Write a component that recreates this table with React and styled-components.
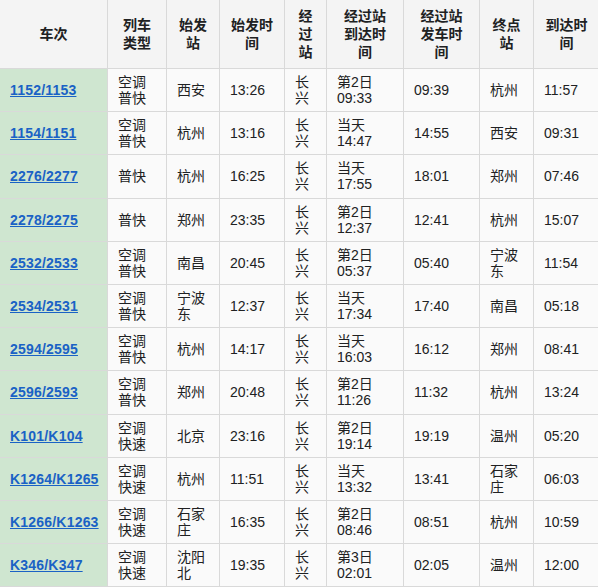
import React from "react";
import styled, { createGlobalStyle } from "styled-components";

const Global = createGlobalStyle`
  html, body { margin: 0; padding: 0; background: #ffffff; }
  body { font-family: "Liberation Sans", Arial, "Noto Sans CJK SC", sans-serif; font-size: 14px; color: #202122; overflow: hidden; }
`;

const Table = styled.table`
  border-collapse: collapse;
  table-layout: fixed;
  width: 600px;
  margin: -1px 0 0 -1px;
  background: #fafafa;
`;

const Th = styled.th`
  border: 1px solid #d9d9d9;
  background: #f4f4f4;
  font-weight: bold;
  text-align: center;
  vertical-align: middle;
  line-height: 18px;
  padding: 7px 4px;
  color: #202122;
`;

const Td = styled.td`
  border: 1px solid #d9d9d9;
  background: ${(p) => (p.$train ? "#cfe6d0" : "#fafafa")};
  text-align: left;
  vertical-align: middle;
  line-height: 16.1px;
  padding: 5px 10px;
  color: #202122;
`;

const Line = styled.span`
  display: block;
  white-space: nowrap;
`;

const TrainLink = styled.a`
  color: #1a62c5;
  font-weight: bold;
  text-decoration: underline;
  letter-spacing: 0.2px;
  cursor: pointer;
`;

const Lines = ({ text }) =>
  text.split("\n").map((l, i) => <Line key={i}>{l}</Line>);

const cols = [108, 59, 53, 65, 42, 77, 76, 54, 66];

const headers = [
  "车次",
  "列车\n类型",
  "始发\n站",
  "始发时\n间",
  "经\n过\n站",
  "经过站\n到达时\n间",
  "经过站\n发车时\n间",
  "终点\n站",
  "到达时\n间",
];

const rows = [
  ["1152/1153", "空调\n普快", "西安", "13:26", "第2日\n09:33", "09:39", "杭州", "11:57"],
  ["1154/1151", "空调\n普快", "杭州", "13:16", "当天\n14:47", "14:55", "西安", "09:31"],
  ["2276/2277", "普快", "杭州", "16:25", "当天\n17:55", "18:01", "郑州", "07:46"],
  ["2278/2275", "普快", "郑州", "23:35", "第2日\n12:37", "12:41", "杭州", "15:07"],
  ["2532/2533", "空调\n普快", "南昌", "20:45", "第2日\n05:37", "05:40", "宁波\n东", "11:54"],
  ["2534/2531", "空调\n普快", "宁波\n东", "12:37", "当天\n17:34", "17:40", "南昌", "05:18"],
  ["2594/2595", "空调\n普快", "杭州", "14:17", "当天\n16:03", "16:12", "郑州", "08:41"],
  ["2596/2593", "空调\n普快", "郑州", "20:48", "第2日\n11:26", "11:32", "杭州", "13:24"],
  ["K101/K104", "空调\n快速", "北京", "23:16", "第2日\n19:14", "19:19", "温州", "05:20"],
  ["K1264/K1265", "空调\n快速", "杭州", "11:51", "当天\n13:32", "13:41", "石家\n庄", "06:03"],
  ["K1266/K1263", "空调\n快速", "石家\n庄", "16:35", "第2日\n08:46", "08:51", "杭州", "10:59"],
  ["K346/K347", "空调\n快速", "沈阳\n北", "19:35", "第3日\n02:01", "02:05", "温州", "12:00"],
];

export default function App() {
  return (
    <>
      <Global />
      <Table>
        <colgroup>
          {cols.map((w, i) => (
            <col key={i} style={{ width: w }} />
          ))}
        </colgroup>
        <thead>
          <tr>
            {headers.map((h) => (
              <Th key={h}>
                <Lines text={h} />
              </Th>
            ))}
          </tr>
        </thead>
        <tbody>
          {rows.map((r) => (
            <tr key={r[0]}>
              <Td $train>
                <TrainLink>{r[0]}</TrainLink>
              </Td>
              {[r[1], r[2], r[3], "长\n兴", r[4], r[5], r[6], r[7]].map((c, i) => (
                <Td key={i}>
                  <Lines text={c} />
                </Td>
              ))}
            </tr>
          ))}
        </tbody>
      </Table>
    </>
  );
}
